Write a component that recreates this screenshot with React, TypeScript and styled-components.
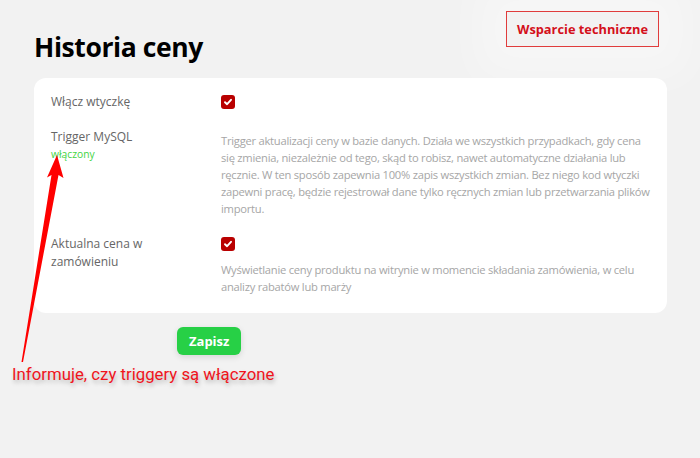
import React from "react";
import styled, { createGlobalStyle } from "styled-components";

// Base
const GlobalStyle = createGlobalStyle`
  html, body {
    margin: 0;
    padding: 0;
    background: #f2f2f2;
    font-family: "Open Sans", "Noto Sans", sans-serif;
  }
`;

const Page = styled.div`
  position: relative;
  width: 700px;
  height: 458px;
  overflow: hidden;
  background: #f2f2f2;
`;

const TopBar = styled.header`
  display: flex;
  justify-content: space-between;
  align-items: flex-start;
  padding: 11px 41px 0 34px;
  height: 67px;
  box-sizing: border-box;
`;

const Heading = styled.h1`
  margin: 18px 0 0;
  font-size: 26.5px;
  font-weight: 700;
  color: #000;
  letter-spacing: -0.4px;
`;

const SupportButton = styled.a`
  display: inline-flex;
  align-items: center;
  height: 36px;
  padding: 0 10px;
  box-sizing: border-box;
  border: 1px solid #e03c3c;
  color: #d4101b;
  font-size: 12.8px;
  font-weight: 700;
  text-decoration: none;
  box-shadow: 0 0 40px 30px rgba(255, 255, 255, 0.35);
`;

const Card = styled.section`
  margin: 11px 33px 0 34px;
  background: #fff;
  border-radius: 12px;
  padding: 15px 12px 18px 17px;
`;

const Row = styled.div<{ $gap?: number }>`
  display: grid;
  grid-template-columns: 170px 1fr;
  margin-bottom: ${({ $gap }) => $gap ?? 0}px;
`;

const Label = styled.div`
  font-size: 12px;
  line-height: 18px;
  color: #666;
  padding-right: 20px;
`;

const Status = styled.div<{ $on: boolean }>`
  margin-top: 1px;
  font-size: 10.3px;
  line-height: 14px;
  color: ${({ $on }) => ($on ? "#42d442" : "#d4101b")};
`;

const Control = styled.div`
  display: flex;
  flex-direction: column;
  align-items: flex-start;
`;

const Description = styled.p<{ $top?: number }>`
  margin: ${({ $top }) => $top ?? 0}px 0 0;
  max-width: 432px;
  font-size: 11.2px;
  line-height: 17px;
  letter-spacing: -0.25px;
  color: #a6a6a6;
`;

const Box = styled.span`
  display: inline-flex;
  align-items: center;
  justify-content: center;
  width: 14px;
  height: 14px;
  border-radius: 3px;
  background: #b90000;
  margin-top: 2px;
`;

const Actions = styled.div`
  padding: 14px 0 0 177px;
`;

const SaveButton = styled.button`
  height: 28px;
  padding: 0 12px;
  border: 0;
  border-radius: 6px;
  background: #27d046;
  color: #fff;
  font-family: "Open Sans", sans-serif;
  font-size: 13px;
  font-weight: 700;
  box-shadow: 0 2px 6px rgba(0, 0, 0, 0.12);
`;

const Note = styled.div`
  margin: 9px 0 0 12px;
  font-family: Roboto, sans-serif;
  font-size: 16.8px;
  color: #f0141c;
  text-shadow: 1px 3px 4px rgba(0, 0, 0, 0.25);
`;

const Arrow = styled.svg`
  position: absolute;
  left: 0;
  top: 0;
  pointer-events: none;
`;

function Check() {
  return (
    <Box>
      <svg width="10" height="10" viewBox="0 0 10 10">
        <path
          d="M2 5.2 L4.1 7.2 L8 2.8"
          fill="none"
          stroke="#fff"
          strokeWidth="1.9"
          strokeLinecap="round"
          strokeLinejoin="round"
        />
      </svg>
    </Box>
  );
}

export default function App() {
  return (
    <>
      <GlobalStyle />
      <Page>
        <TopBar>
          <Heading>Historia ceny</Heading>
          <SupportButton href="#">Wsparcie techniczne</SupportButton>
        </TopBar>

        <Card>
          <Row $gap={17}>
            <Label>Włącz wtyczkę</Label>
            <Control>
              <Check />
            </Control>
          </Row>

          <Row $gap={18}>
            <div>
              <Label>Trigger MySQL</Label>
              <Status $on>włączony</Status>
            </div>
            <Control>
              <Description $top={4}>
                Trigger aktualizacji ceny w bazie danych. Działa we wszystkich
                przypadkach, gdy cena się zmienia, niezależnie od tego, skąd to
                robisz, nawet automatyczne działania lub ręcznie. W ten sposób
                zapewnia 100% zapis wszystkich zmian. Bez niego kod wtyczki
                zapewni pracę, będzie rejestrował dane tylko ręcznych zmian lub
                przetwarzania plików importu.
              </Description>
            </Control>
          </Row>

          <Row>
            <Label>Aktualna cena w zamówieniu</Label>
            <Control>
              <Check />
              <Description $top={10}>
                Wyświetlanie ceny produktu na witrynie w momencie składania
                zamówienia, w celu analizy rabatów lub marży
              </Description>
            </Control>
          </Row>
        </Card>

        <Actions>
          <SaveButton>Zapisz</SaveButton>
        </Actions>

        <Note>Informuje, czy triggery są włączone</Note>

        <Arrow width="700" height="458" viewBox="0 0 700 458">
          <path
            d="M21.5 362 L51.5 175 L47 177.5 L57 155 L63.5 178 L58.5 175 L23 362 Z"
            fill="#ff0000"
          />
        </Arrow>
      </Page>
    </>
  );
}
